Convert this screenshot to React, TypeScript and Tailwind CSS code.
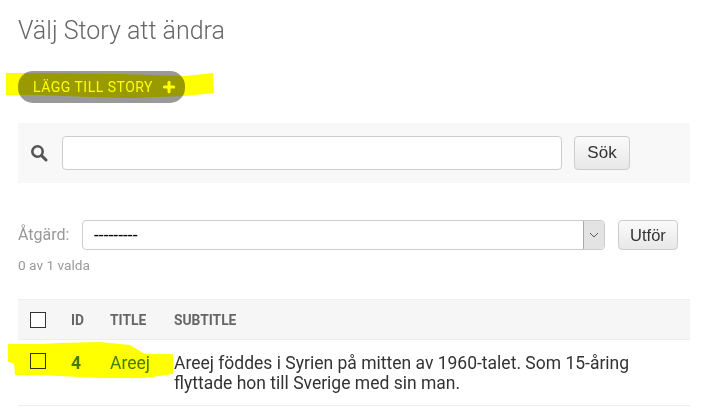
import React from 'react';
import { Plus } from 'lucide-react';

const Checkbox = () => (
  <span className="block w-4 h-4 border border-[#333] bg-white" />
);

const SearchIcon = () => (
  <svg width="18" height="18" viewBox="0 0 18 18" fill="none" stroke="#555" aria-hidden="true">
    <circle cx="7.5" cy="7.5" r="5.2" strokeWidth="2.6" />
    <path d="M11.5 11.5L16 16" strokeWidth="3" strokeLinecap="round" />
  </svg>
);

const Highlights = () => (
  <svg
    className="absolute left-0 top-0 mix-blend-multiply pointer-events-none"
    width="704"
    height="417"
    viewBox="0 0 704 417"
    aria-hidden="true"
  >
    <path
      d="M6 73 L40 73 L120 74 L185 76 L213 73 L214 93 L185 96 L130 98 L90 97 L40 95 L6 95 Z"
      fill="#ffff00"
    />
    <path
      d="M8 344 L40 344 L60 343 L100 342 L130 345 L145 354 L173 354 L173 374 L145 378 L100 378 L60 376 L40 375 L15 375 L14 363 L8 362 Z"
      fill="#ffff00"
    />
  </svg>
);

export default function App() {
  return (
    <div className="relative w-[704px] h-[417px] overflow-hidden bg-white pl-[18px] pr-[14px] font-['Roboto',sans-serif] text-[#333]">
      <h1 className="pt-[15px] text-[25px] leading-[32px] font-light text-[#666]">
        Välj Story att ändra
      </h1>

      <a className="mt-6 flex w-[167px] h-8 items-center gap-2 rounded-[15px] bg-[#999] pl-[15px] text-[14px] tracking-[0.5px] text-white">
        LÄGG TILL STORY
        <Plus size={16} strokeWidth={4.5} />
      </a>

      <div className="mt-5 flex h-[60px] items-center bg-[#f8f8f8] pl-[12px]">
        <SearchIcon />
        <input className="ml-[14px] h-[34px] w-[500px] rounded border border-[#ccc] bg-white" />
        <button className="ml-3 h-[34px] w-[56px] rounded border border-[#ccc] bg-gradient-to-b from-[#fafafa] to-[#e8e8e8] text-[17px] font-['Liberation_Sans',sans-serif] text-[#333]">
          Sök
        </button>
      </div>

      <div className="mt-[37px] flex items-center">
        <span className="w-16 text-[16px] text-[#999]">Åtgärd:</span>
        <div className="flex h-[30px] w-[523px] items-center justify-between rounded border border-[#ccc] bg-white pl-[11px]">
          <span className="text-[17.5px] leading-[20px] text-black">---------</span>
          <span className="flex h-[28px] w-[21px] items-center justify-center rounded-r border-l border-[#aaa] bg-[#e3e3e3]">
            <svg width="10" height="6" viewBox="0 0 10 6" fill="none" stroke="#555" aria-hidden="true">
              <path d="M1 1l4 4 4-4" />
            </svg>
          </span>
        </div>
        <button className="ml-[13px] h-[30px] w-[60px] rounded border border-[#ccc] bg-gradient-to-b from-[#fafafa] to-[#e8e8e8] text-[16.5px] font-['Liberation_Sans',sans-serif] text-[#333]">
          Utför
        </button>
      </div>

      <p className="mt-[7px] text-[13.7px] leading-[16px] text-[#999]">0 av 1 valda</p>

      <div className="mt-[26px] flex h-[41px] items-center border-y border-[#eee] bg-[#f6f6f6] text-[13.8px] font-bold text-[#666]">
        <span className="w-[53px] pl-3">
          <Checkbox />
        </span>
        <span className="w-[39px] pt-[2px]">ID</span>
        <span className="w-[64px] pt-[2px]">TITLE</span>
        <span className="pt-[2px]">SUBTITLE</span>
      </div>
      <div className="flex h-[66px] border-b border-[#eee] pt-3">
        <span className="w-[53px] pl-3 pt-[1px]">
          <Checkbox />
        </span>
        <span className="w-[39px] pt-[1px] text-[17.5px] leading-[20px] font-bold text-[#447e9b]">4</span>
        <span className="w-[64px] pt-[1px] text-[17.5px] leading-[20px] text-[#447e9b]">Areej</span>
        <p className="pt-[1px] text-[17.5px] leading-[20px] text-[#333]">
          Areej föddes i Syrien på mitten av 1960-talet. Som 15-åring
          <br />
          flyttade hon till Sverige med sin man.
        </p>
      </div>

      <Highlights />
    </div>
  );
}
